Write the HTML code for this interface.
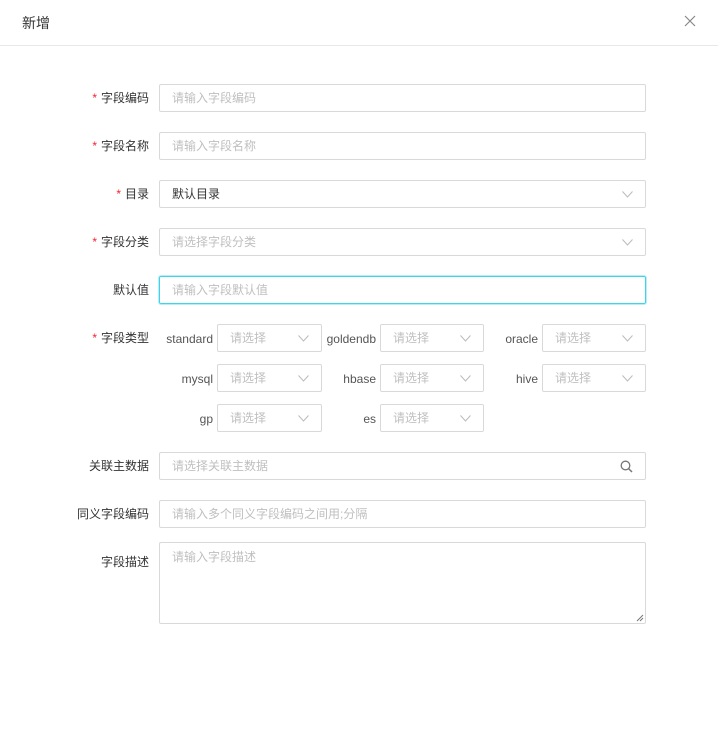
<!DOCTYPE html>
<html><head><meta charset="utf-8"><style>
*{box-sizing:border-box;margin:0;padding:0}
body{width:718px;height:730px;background:#fff;font-family:"Liberation Sans","Noto Sans CJK SC",sans-serif;font-size:12px;color:#333;position:relative;overflow:hidden}
.hdr{position:absolute;left:0;top:0;width:718px;height:46px;border-bottom:1px solid #e8e8e8}
.hdr .t{position:absolute;left:22px;top:13px;font-size:14px;color:#333}
.x{position:absolute;left:684px;top:15px}
.lbl{position:absolute;right:569px;font-size:12px;color:#333;white-space:nowrap;line-height:16px}
.lbl b{color:#f5222d;font-weight:normal;margin-right:4px}
.in{position:absolute;border:1px solid #d9d9d9;border-radius:2px;height:28px;color:#bfbfbf;padding-left:12px;line-height:26px;font-size:12px}
.in.dark{color:#333}
.in.focus{border-color:#40d4ea;box-shadow:0 0 0 1px #b8eef6}
.chev{position:absolute;right:12px;top:10px}
.sl{position:absolute;font-size:12px;color:#555;text-align:right;line-height:16px}
</style></head><body>
<div class="hdr"><div class="t">新增</div>
<svg class="x" width="12" height="12" viewBox="0 0 12 12"><path d="M1 1L11 11M11 1L1 11" stroke="#888" stroke-width="1.2"/></svg></div>

<div class="lbl" style="top:90px"><b>*</b>字段编码</div>
<div class="in" style="left:159px;top:84px;width:487px">请输入字段编码</div>
<div class="lbl" style="top:138px"><b>*</b>字段名称</div>
<div class="in" style="left:159px;top:132px;width:487px">请输入字段名称</div>
<div class="lbl" style="top:186px"><b>*</b>目录</div>
<div class="in dark" style="left:159px;top:180px;width:487px">默认目录<svg class="chev" width="11" height="7" viewBox="0 0 11 7"><path d="M0.5 0.5L5.5 6L10.5 0.5" fill="none" stroke="#bbb"/></svg></div>
<div class="lbl" style="top:234px"><b>*</b>字段分类</div>
<div class="in" style="left:159px;top:228px;width:487px">请选择字段分类<svg class="chev" width="11" height="7" viewBox="0 0 11 7"><path d="M0.5 0.5L5.5 6L10.5 0.5" fill="none" stroke="#bbb"/></svg></div>
<div class="lbl" style="top:282px">默认值</div>
<div class="in focus" style="left:159px;top:276px;width:487px">请输入字段默认值</div>
<div class="lbl" style="top:330px"><b>*</b>字段类型</div>

<div class="sl" style="left:150px;width:63px;top:331px">standard</div>
<div class="in" style="left:217px;top:324px;width:105px">请选择<svg class="chev" width="11" height="7" viewBox="0 0 11 7"><path d="M0.5 0.5L5.5 6L10.5 0.5" fill="none" stroke="#bbb"/></svg></div>
<div class="sl" style="left:310px;width:66px;top:331px">goldendb</div>
<div class="in" style="left:380px;top:324px;width:104px">请选择<svg class="chev" width="11" height="7" viewBox="0 0 11 7"><path d="M0.5 0.5L5.5 6L10.5 0.5" fill="none" stroke="#bbb"/></svg></div>
<div class="sl" style="left:480px;width:58px;top:331px">oracle</div>
<div class="in" style="left:542px;top:324px;width:104px">请选择<svg class="chev" width="11" height="7" viewBox="0 0 11 7"><path d="M0.5 0.5L5.5 6L10.5 0.5" fill="none" stroke="#bbb"/></svg></div>

<div class="sl" style="left:150px;width:63px;top:371px">mysql</div>
<div class="in" style="left:217px;top:364px;width:105px">请选择<svg class="chev" width="11" height="7" viewBox="0 0 11 7"><path d="M0.5 0.5L5.5 6L10.5 0.5" fill="none" stroke="#bbb"/></svg></div>
<div class="sl" style="left:310px;width:66px;top:371px">hbase</div>
<div class="in" style="left:380px;top:364px;width:104px">请选择<svg class="chev" width="11" height="7" viewBox="0 0 11 7"><path d="M0.5 0.5L5.5 6L10.5 0.5" fill="none" stroke="#bbb"/></svg></div>
<div class="sl" style="left:480px;width:58px;top:371px">hive</div>
<div class="in" style="left:542px;top:364px;width:104px">请选择<svg class="chev" width="11" height="7" viewBox="0 0 11 7"><path d="M0.5 0.5L5.5 6L10.5 0.5" fill="none" stroke="#bbb"/></svg></div>

<div class="sl" style="left:150px;width:63px;top:411px">gp</div>
<div class="in" style="left:217px;top:404px;width:105px">请选择<svg class="chev" width="11" height="7" viewBox="0 0 11 7"><path d="M0.5 0.5L5.5 6L10.5 0.5" fill="none" stroke="#bbb"/></svg></div>
<div class="sl" style="left:310px;width:66px;top:411px">es</div>
<div class="in" style="left:380px;top:404px;width:104px">请选择<svg class="chev" width="11" height="7" viewBox="0 0 11 7"><path d="M0.5 0.5L5.5 6L10.5 0.5" fill="none" stroke="#bbb"/></svg></div>

<div class="lbl" style="top:458px">关联主数据</div>
<div class="in" style="left:159px;top:452px;width:487px">请选择关联主数据<svg style="position:absolute;right:12px;top:7px" width="13" height="13" viewBox="0 0 13 13"><circle cx="5.5" cy="5.5" r="4.3" fill="none" stroke="#777" stroke-width="1.3"/><path d="M8.6 8.6L12 12" stroke="#777" stroke-width="1.5"/></svg></div>
<div class="lbl" style="top:506px">同义字段编码</div>
<div class="in" style="left:159px;top:500px;width:487px">请输入多个同义字段编码之间用;分隔</div>
<div class="lbl" style="top:554px">字段描述</div>
<div class="in" style="left:159px;top:542px;width:487px;height:82px;line-height:16px;padding-top:6px">请输入字段描述<svg style="position:absolute;right:1px;bottom:1px" width="8" height="8" viewBox="0 0 8 8"><path d="M7 1L1 7M7 4L4 7" stroke="#777"/></svg></div>
</body></html>
